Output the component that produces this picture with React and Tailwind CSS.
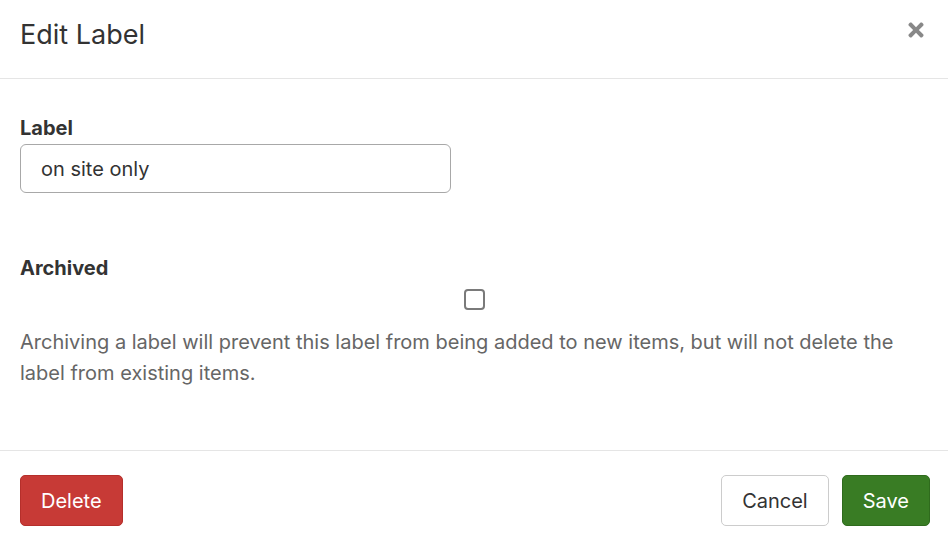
import { FaTimes } from "react-icons/fa";

export default function App() {
  return (
    <div
      className="w-[948px] h-[546px] bg-white flex flex-col text-[#333]"
      style={{ fontFamily: "Inter, 'Liberation Sans', sans-serif" }}
    >
      {/* header */}
      <div className="h-[79px] shrink-0 flex items-center justify-between pl-5 pr-5 border-b border-[#e5e5e5]">
        <h1 className="text-[27px] leading-none font-normal text-[#333] -mt-[10px]">Edit Label</h1>
        <button type="button" className="text-[#888] text-[22px] -mt-[19px] mr-[1px]">
          <FaTimes />
        </button>
      </div>

      {/* body */}
      <div className="flex-1 px-5 pt-[36px]">
        <label className="block text-[20px] font-bold leading-[26px] text-[#333]">Label</label>
        <input
          className="mt-[3px] w-[431px] h-[49px] rounded-[6px] border border-[#a8a8a8] px-5 text-[20px] text-[#333] outline-none"
          defaultValue="on site only"
        />

        <label className="block mt-[62px] text-[20px] font-bold leading-[26px] text-[#333]">Archived</label>
        <div className="flex justify-center mt-[8px]">
          <input type="checkbox" className="appearance-none w-[21px] h-[21px] rounded-[4px] border-2 border-[#7a7a7a] bg-white" />
        </div>
        <p className="mt-[17px] text-[20px] leading-[31px] text-[#666]">
          Archiving a label will prevent this label from being added to new items, but will not delete the label from existing items.
        </p>
      </div>

      {/* footer */}
      <div className="h-[96px] shrink-0 flex items-center justify-between pl-5 pr-[18px] pt-[4px] border-t border-[#e5e5e5]">
        <button type="button" className="h-[51px] px-5 rounded-[5px] bg-[#c73a36] border border-[#b52f2b] text-white text-[20px]">
          Delete
        </button>
        <div className="flex gap-[13px]">
          <button type="button" className="h-[51px] px-5 rounded-[5px] bg-white border border-[#ccc] text-[#333] text-[20px]">
            Cancel
          </button>
          <button type="button" className="h-[51px] px-5 rounded-[5px] bg-[#397c24] border border-[#2f6b1d] text-white text-[20px]">
            Save
          </button>
        </div>
      </div>
    </div>
  );
}
